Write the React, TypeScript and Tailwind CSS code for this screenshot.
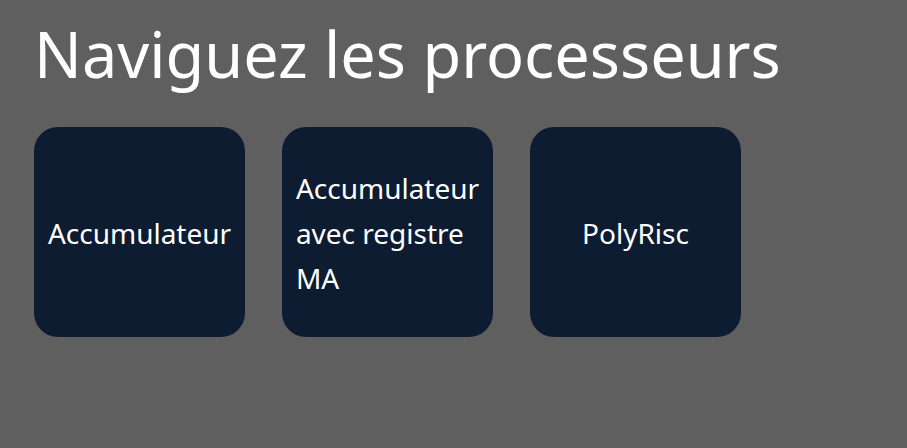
const processors = ["Accumulateur", "Accumulateur avec registre MA", "PolyRisc"];

export default function App() {
  return (
    <main className="min-h-screen bg-[#5f5f5f] px-[34px] pt-[14px] font-['Noto_Sans',sans-serif] text-white">
      <h1 className="text-[63px] leading-[80px]">Naviguez les processeurs</h1>
      <nav className="mt-[33px] flex flex-wrap gap-[37px]">
        {processors.map((name) => (
          <button
            key={name}
            type="button"
            className="flex h-[210px] w-[211px] items-center justify-center rounded-[24px] bg-[#0e1c31] px-[14px] pt-[2px] text-left text-[28px] leading-[45px]"
          >
            {name}
          </button>
        ))}
      </nav>
    </main>
  );
}
